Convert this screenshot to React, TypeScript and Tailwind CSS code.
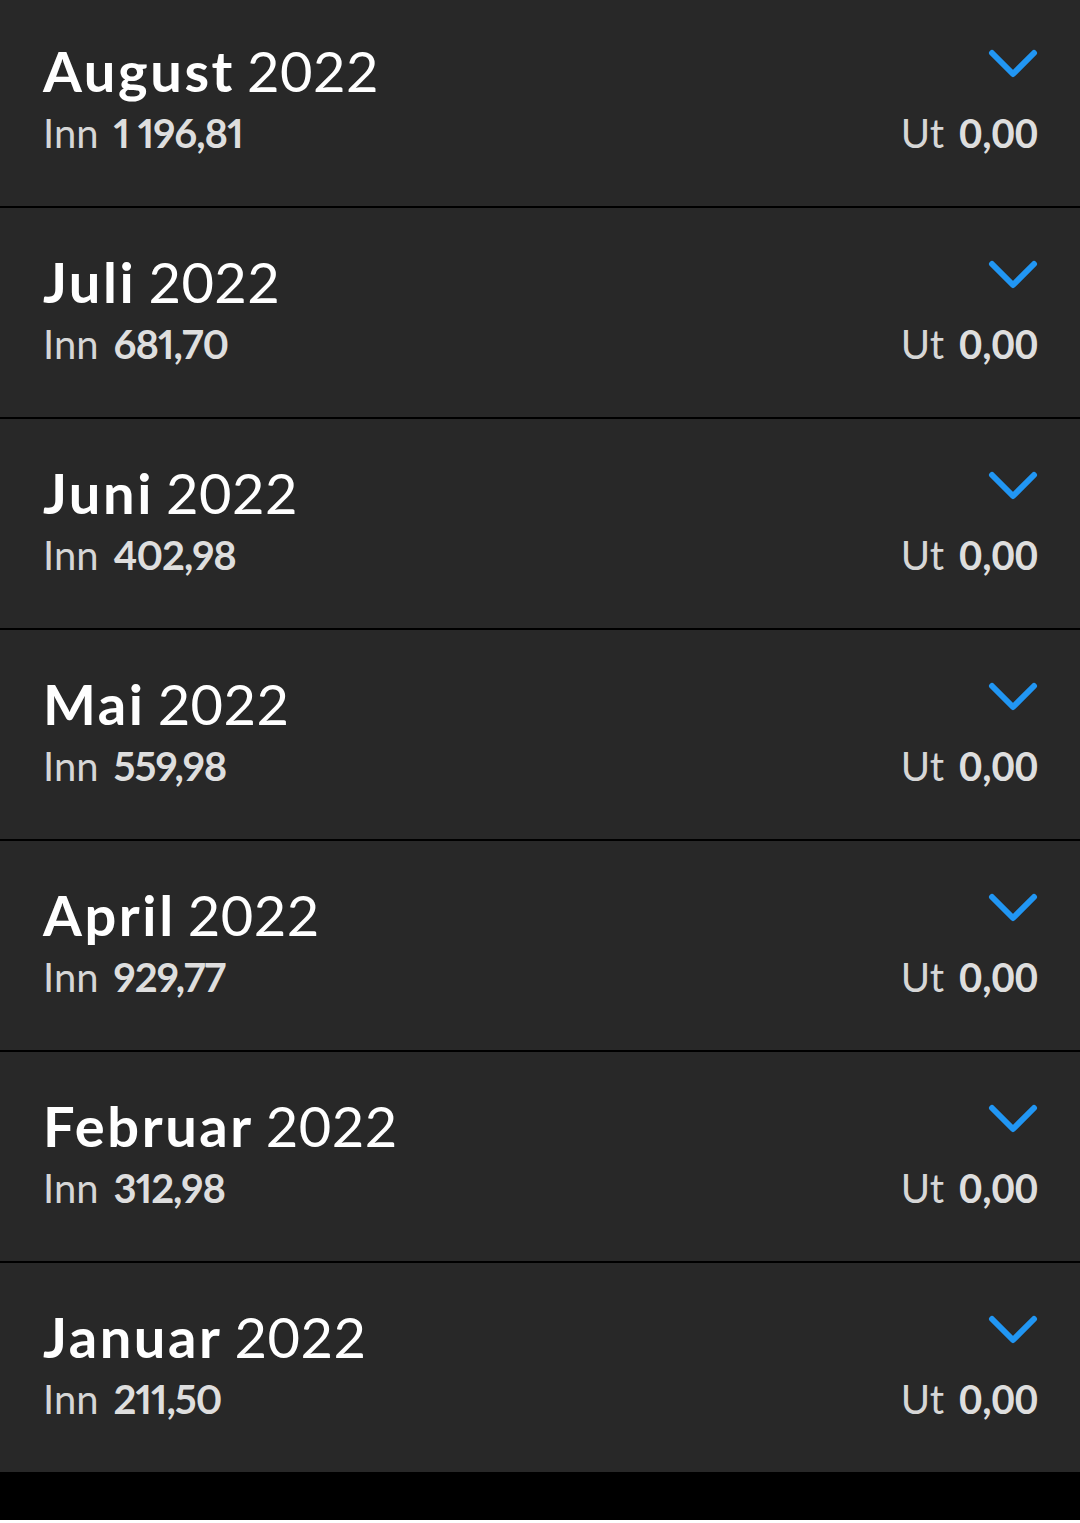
const months = [
  { name: 'August', year: '2022', inn: '1 196,81', ut: '0,00' },
  { name: 'Juli', year: '2022', inn: '681,70', ut: '0,00' },
  { name: 'Juni', year: '2022', inn: '402,98', ut: '0,00' },
  { name: 'Mai', year: '2022', inn: '559,98', ut: '0,00' },
  { name: 'April', year: '2022', inn: '929,77', ut: '0,00' },
  { name: 'Februar', year: '2022', inn: '312,98', ut: '0,00' },
  { name: 'Januar', year: '2022', inn: '211,50', ut: '0,00' },
];

function Chevron() {
  return (
    <svg width="50" height="30" viewBox="0 0 50 30" fill="none" aria-hidden>
      <path
        d="M4 4 L25 25 L46 4"
        stroke="#2196f3"
        strokeWidth="6"
        strokeLinecap="round"
        strokeLinejoin="round"
      />
    </svg>
  );
}

export default function App() {
  return (
    <div className="min-h-screen bg-black font-['Lato',sans-serif]">
      <ul className="-mt-[3px]">
        {months.map((m) => (
          <li
            key={m.name}
            className="flex h-[211px] justify-between border-b-2 border-black bg-[#282828] pl-[43px] pr-[42px]"
          >
            <div className="pt-[46px]">
              <h2 className="text-[56px] leading-[56px] text-white">
                <span className="font-bold tracking-[2.6px]">{m.name}</span>
                <span className="ml-[12px] tracking-[0.5px]">{m.year}</span>
              </h2>
              <p className="mt-[14px] text-[40px] leading-[40px] text-[#d6d6d6]">
                <span>Inn</span>
                <span className="ml-[15px] font-bold tracking-[-1px] text-[#dedede] proportional-nums">
                  {m.inn}
                </span>
              </p>
            </div>
            <div className="flex flex-col items-end pt-[52px]">
              <Chevron />
              <p className="mt-[34px] text-[40px] leading-[40px] text-[#d6d6d6]">
                <span>Ut</span>
                <span className="ml-[15px] font-bold text-[#dedede]">{m.ut}</span>
              </p>
            </div>
          </li>
        ))}
      </ul>
    </div>
  );
}
